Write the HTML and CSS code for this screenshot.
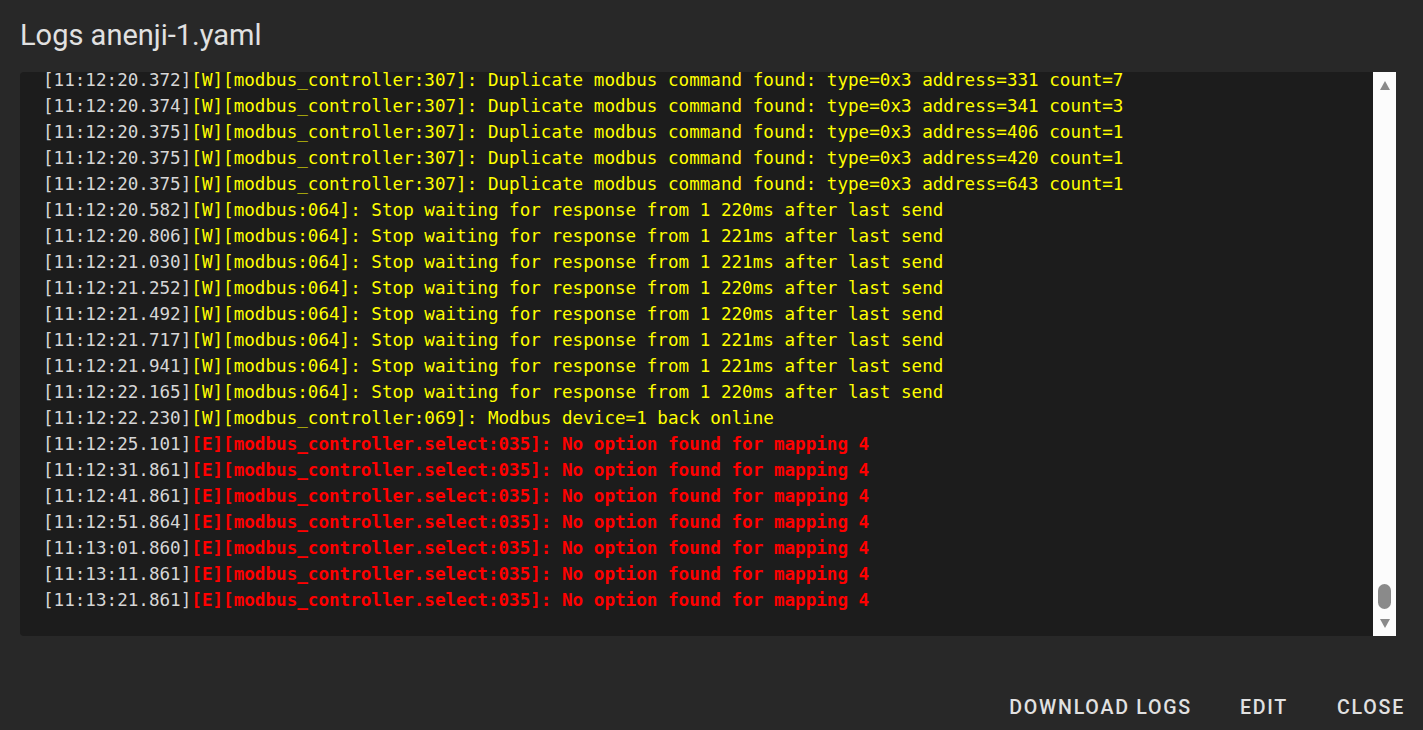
FILE: index.html
```html
<!DOCTYPE html>
<html lang="en">
<head>
  <meta charset="UTF-8">
  <title>Logs anenji-1.yaml</title>
  <link rel="stylesheet" href="styles.css">
</head>
<body>
<div class="dialog">
  <h2 class="title">Logs anenji-1.yaml</h2>

  <div class="logbox">
    <div class="lines">
      <div class="line"><span class="ts">[11:12:20.372]</span><span class="warn">[W][modbus_controller:307]: Duplicate modbus command found: type=0x3 address=331 count=7</span></div>
      <div class="line"><span class="ts">[11:12:20.374]</span><span class="warn">[W][modbus_controller:307]: Duplicate modbus command found: type=0x3 address=341 count=3</span></div>
      <div class="line"><span class="ts">[11:12:20.375]</span><span class="warn">[W][modbus_controller:307]: Duplicate modbus command found: type=0x3 address=406 count=1</span></div>
      <div class="line"><span class="ts">[11:12:20.375]</span><span class="warn">[W][modbus_controller:307]: Duplicate modbus command found: type=0x3 address=420 count=1</span></div>
      <div class="line"><span class="ts">[11:12:20.375]</span><span class="warn">[W][modbus_controller:307]: Duplicate modbus command found: type=0x3 address=643 count=1</span></div>
      <div class="line"><span class="ts">[11:12:20.582]</span><span class="warn">[W][modbus:064]: Stop waiting for response from 1 220ms after last send</span></div>
      <div class="line"><span class="ts">[11:12:20.806]</span><span class="warn">[W][modbus:064]: Stop waiting for response from 1 221ms after last send</span></div>
      <div class="line"><span class="ts">[11:12:21.030]</span><span class="warn">[W][modbus:064]: Stop waiting for response from 1 221ms after last send</span></div>
      <div class="line"><span class="ts">[11:12:21.252]</span><span class="warn">[W][modbus:064]: Stop waiting for response from 1 220ms after last send</span></div>
      <div class="line"><span class="ts">[11:12:21.492]</span><span class="warn">[W][modbus:064]: Stop waiting for response from 1 220ms after last send</span></div>
      <div class="line"><span class="ts">[11:12:21.717]</span><span class="warn">[W][modbus:064]: Stop waiting for response from 1 221ms after last send</span></div>
      <div class="line"><span class="ts">[11:12:21.941]</span><span class="warn">[W][modbus:064]: Stop waiting for response from 1 221ms after last send</span></div>
      <div class="line"><span class="ts">[11:12:22.165]</span><span class="warn">[W][modbus:064]: Stop waiting for response from 1 220ms after last send</span></div>
      <div class="line"><span class="ts">[11:12:22.230]</span><span class="warn">[W][modbus_controller:069]: Modbus device=1 back online</span></div>
      <div class="line"><span class="ts">[11:12:25.101]</span><span class="err">[E][modbus_controller.select:035]: No option found for mapping 4</span></div>
      <div class="line"><span class="ts">[11:12:31.861]</span><span class="err">[E][modbus_controller.select:035]: No option found for mapping 4</span></div>
      <div class="line"><span class="ts">[11:12:41.861]</span><span class="err">[E][modbus_controller.select:035]: No option found for mapping 4</span></div>
      <div class="line"><span class="ts">[11:12:51.864]</span><span class="err">[E][modbus_controller.select:035]: No option found for mapping 4</span></div>
      <div class="line"><span class="ts">[11:13:01.860]</span><span class="err">[E][modbus_controller.select:035]: No option found for mapping 4</span></div>
      <div class="line"><span class="ts">[11:13:11.861]</span><span class="err">[E][modbus_controller.select:035]: No option found for mapping 4</span></div>
      <div class="line"><span class="ts">[11:13:21.861]</span><span class="err">[E][modbus_controller.select:035]: No option found for mapping 4</span></div>
    </div>
    <div class="scrollbar">
      <div class="arrow-up"></div>
      <div class="track"><div class="thumb"></div></div>
      <div class="arrow-down"></div>
    </div>
  </div>

  <div class="actions">
    <button class="btn">Download logs</button>
    <button class="btn">Edit</button>
    <button class="btn">Close</button>
  </div>
</div>
</body>
</html>
```

FILE: styles.css
```css
body {
  margin: 0;
  background: #282828;
  font-family: Roboto, "Noto Sans", sans-serif;
  height: 730px;
  overflow: hidden;
}

.dialog {
  display: flex;
  flex-direction: column;
  height: 730px;
}

.title {
  margin: 0;
  padding: 19px 20px 21px;
  font-size: 29px;
  line-height: 32px;
  font-weight: 400;
  color: #e1e1e1;
}

.logbox {
  display: flex;
  height: 564px;
  margin: 0 27px 0 20px;
  background: #1c1c1c;
  border-radius: 4px 0 0 4px;
  overflow: hidden;
}

.lines {
  flex: 1;
  overflow: hidden;
  padding-left: 23px;
  font-family: "DejaVu Sans Mono", "Liberation Mono", monospace;
  font-size: 17.6px;
  line-height: 26px;
}

.line {
  white-space: pre;
}

.line:first-child {
  margin-top: -5px;
}

.ts {
  color: #d6d6d6;
}

.warn {
  color: #ffff00;
}

.err {
  color: #ff0000;
  font-weight: bold;
}

.scrollbar {
  width: 23px;
  background: #fcfcfc;
  display: flex;
  flex-direction: column;
  align-items: center;
  padding: 9px 0 8px;
  box-sizing: border-box;
}

.arrow-up {
  width: 0;
  height: 0;
  border-left: 5.5px solid transparent;
  border-right: 5.5px solid transparent;
  border-bottom: 9px solid #8a8a8a;
}

.arrow-down {
  width: 0;
  height: 0;
  border-left: 5.5px solid transparent;
  border-right: 5.5px solid transparent;
  border-top: 9px solid #8a8a8a;
}

.track {
  flex: 1;
  display: flex;
  flex-direction: column;
  justify-content: flex-end;
  padding-bottom: 10px;
}

.thumb {
  width: 13px;
  height: 25px;
  border-radius: 7px;
  background: #8a8a8a;
}

.actions {
  flex: 1;
  display: flex;
  justify-content: flex-end;
  align-items: flex-end;
  padding: 0 18px 8px 0;
  gap: 48px;
}

.btn {
  background: none;
  border: none;
  padding: 0;
  font-family: Roboto, "Noto Sans", sans-serif;
  font-size: 19.6px;
  font-weight: 500;
  letter-spacing: 1.75px;
  text-transform: uppercase;
  color: #e1e1e1;
  line-height: 28px;
  cursor: pointer;
}

.btn:last-child {
  margin-left: 1px;
}
```
